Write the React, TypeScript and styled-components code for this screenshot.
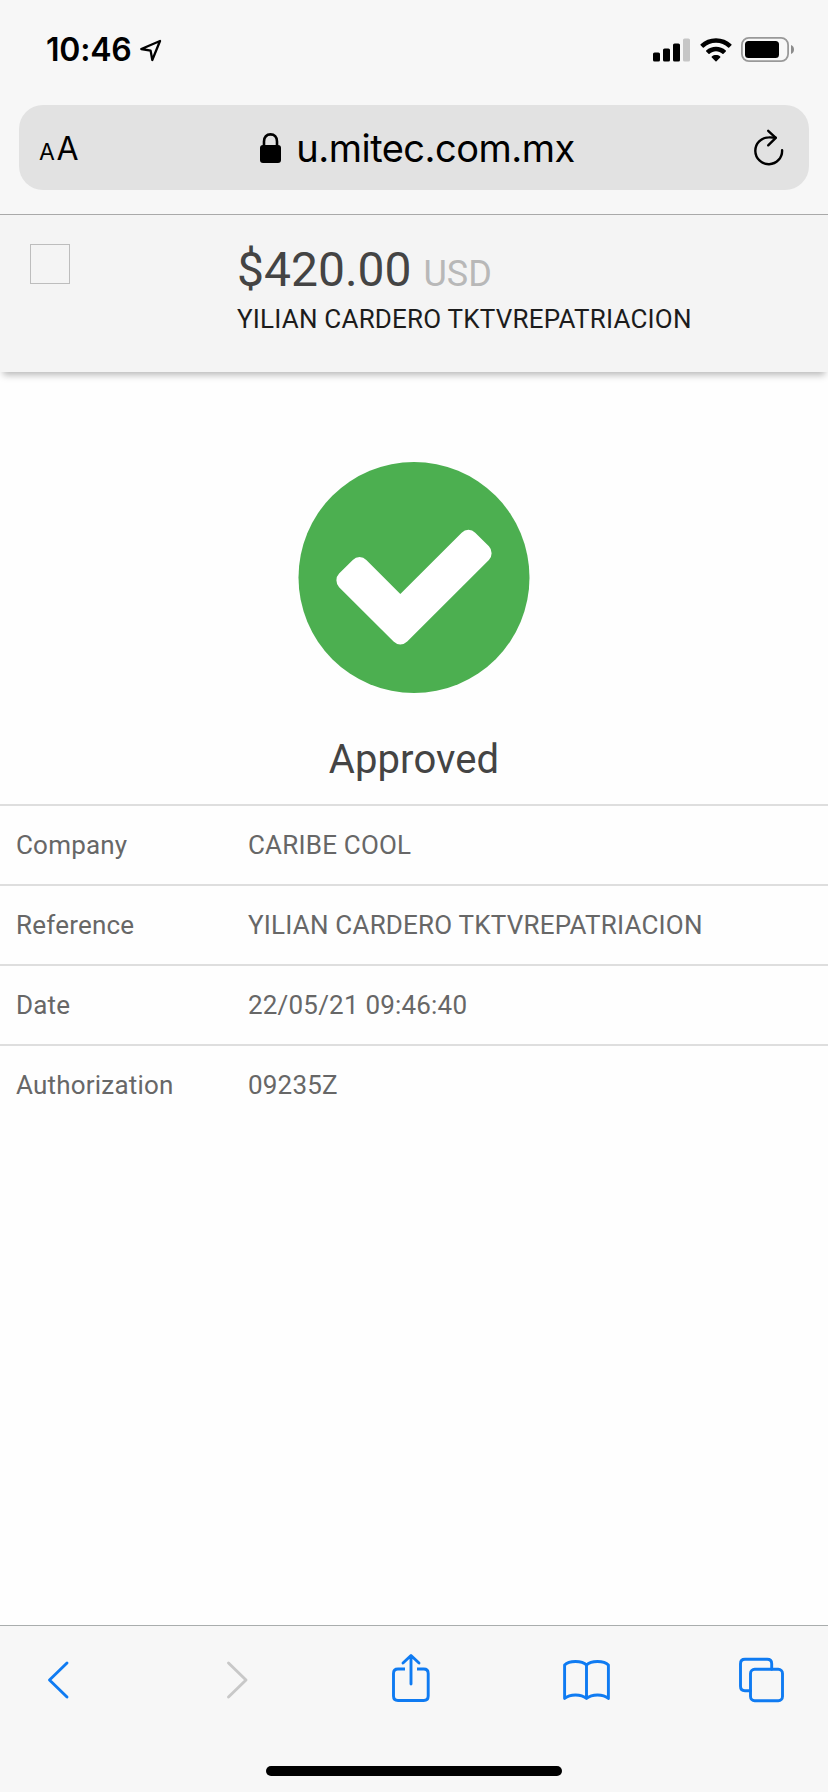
import React from 'react';
import styled, { createGlobalStyle } from 'styled-components';

const GlobalStyle = createGlobalStyle`
  *, *::before, *::after { box-sizing: border-box; }
  html, body { margin: 0; padding: 0; background: #fff; }
  svg { display: block; flex: none; }
`;

const Screen = styled.div`
  display: flex;
  flex-direction: column;
  width: 828px;
  height: 1792px;
  overflow: hidden;
  background: #fefefe;
  font-family: Roboto, sans-serif;
`;

const BrowserTop = styled.header`
  flex: none;
  height: 215px;
  background: #f7f7f7;
  border-bottom: 1px solid #a9a9a9;
  font-family: Inter, sans-serif;
  color: #000;
`;

const StatusBar = styled.div`
  display: flex;
  align-items: center;
  justify-content: space-between;
  height: 105px;
  padding: 0 34px 6px 46px;
`;

const StatusGroup = styled.div<{ $gap: number }>`
  display: flex;
  align-items: center;
  gap: ${(p) => p.$gap}px;
`;

const Clock = styled.span`
  font-size: 32px;
  font-weight: 600;
  line-height: 40px;
  letter-spacing: -0.2px;
`;

const AddressBar = styled.div`
  display: grid;
  grid-template-columns: 100px 1fr 100px;
  align-items: center;
  height: 85px;
  margin: 0 19px;
  padding: 0 25px 0 20px;
  border-radius: 24px;
  background: #e2e2e2;
`;

const TextSize = styled.div`
  display: flex;
  align-items: baseline;
  gap: 1.5px;
  padding-top: 5px;
  line-height: 40px;
`;

const Letter = styled.span<{ $size: number }>`
  font-size: ${(p) => p.$size}px;
`;

const Location = styled.div`
  display: flex;
  align-items: center;
  justify-content: center;
  gap: 15px;
  padding-left: 12px;
`;

const Host = styled.span`
  font-size: 38px;
  line-height: 48px;
  letter-spacing: -0.5px;
`;

const ReloadSlot = styled.div`
  display: flex;
  justify-content: flex-end;
`;

const PaymentHeader = styled.section`
  flex: none;
  display: flex;
  height: 157px;
  padding: 29px 30px 0;
  background: #f4f4f4;
  box-shadow: 0 6px 7px -3px rgba(0, 0, 0, 0.28);
`;

const Logo = styled.div`
  flex: none;
  width: 40px;
  height: 40px;
  margin-right: 167px;
  border: 1px solid #bdbdbd;
`;

const Amount = styled.div`
  height: 55px;
  margin-top: -2px;
  font-size: 48px;
  line-height: 55px;
  color: #444;
`;

const Currency = styled.span`
  font-size: 36px;
  color: #b8b8b8;
`;

const Concept = styled.div`
  margin-top: 6px;
  font-size: 26px;
  line-height: 32px;
  letter-spacing: 0.2px;
  color: #1c1c1c;
`;

const Result = styled.main`
  flex: 1;
  display: flex;
  flex-direction: column;
  align-items: center;
  padding-top: 90px;
`;

const ResultTitle = styled.h1`
  margin: 43px 0 0;
  height: 68px;
  font-size: 40px;
  font-weight: 400;
  line-height: 48px;
  letter-spacing: 0.1px;
  color: #444;
`;

const Details = styled.dl`
  width: 100%;
  margin: 0;
`;

const DetailRow = styled.div`
  display: grid;
  grid-template-columns: 232px 1fr;
  align-items: center;
  height: 80px;
  padding: 0 16px;
  border-top: 2px solid #dedede;
  font-size: 26px;
  line-height: 32px;
  letter-spacing: 0.2px;
  color: #676767;
`;

const Term = styled.dt``;

const Value = styled.dd`
  margin: 0;
`;

const Toolbar = styled.footer`
  flex: none;
  display: flex;
  flex-direction: column;
  justify-content: space-between;
  height: 167px;
  padding: 26px 0 16px;
  border-top: 1px solid #a9adad;
  background: #f7f7f7;
`;

const ToolbarButtons = styled.nav`
  display: flex;
  gap: 128px;
  padding-left: 34px;
`;

const HomeIndicator = styled.div`
  width: 296px;
  height: 10px;
  margin: 0 auto;
  border-radius: 5px;
  background: #000;
`;

const ToolSvg = styled.svg<{ $muted?: boolean }>`
  width: 48px;
  height: 56px;
  overflow: visible;
  fill: none;
  stroke: ${(p) => (p.$muted ? '#c8c8c8' : '#0f7bf2')};
  stroke-width: 2.9;
  stroke-linecap: round;
  stroke-linejoin: round;
`;

const LocationArrow = () => (
  <svg width="22" height="24" viewBox="0 0 22 24" fill="none" stroke="#000" strokeWidth="2.3" strokeLinejoin="round">
    <path d="M1.3 11 L20 3 L12.3 22 L10.6 12.6 Z" />
  </svg>
);

const Signal = () => (
  <svg width="37" height="24" viewBox="0 0 37 24">
    <rect x="0" y="14.5" width="7" height="9" rx="1.6" />
    <rect x="10" y="10.5" width="7" height="13" rx="1.6" />
    <rect x="20" y="5.5" width="7" height="18" rx="1.6" />
    <rect x="30" y="0.5" width="7" height="23" rx="1.6" fill="#c6c6c6" />
  </svg>
);

const Wifi = () => (
  <svg width="32" height="24" viewBox="0 0 32 24">
    <path d="M16 0.3 C10 0.3 4.6 2.5 0.6 6.3 Q0.1 6.8 0.6 7.3 L2.8 9.5 Q3.3 10 3.9 9.5 C7.1 6.5 11.3 4.8 16 4.8 C20.7 4.8 24.9 6.5 28.1 9.5 Q28.7 10 29.2 9.5 L31.4 7.3 Q31.9 6.8 31.4 6.3 C27.4 2.5 22 0.3 16 0.3 Z" />
    <path d="M16 8.7 C12.3 8.7 9 10 6.2 12.4 Q5.7 12.9 6.2 13.4 L8.5 15.7 Q9 16.2 9.6 15.7 C11.4 14.1 13.6 13.2 16 13.2 C18.4 13.2 20.6 14.1 22.4 15.7 Q23 16.2 23.5 15.7 L25.8 13.4 Q26.3 12.9 25.8 12.4 C23 10 19.7 8.7 16 8.7 Z" />
    <path d="M16 17 C14.4 17 13 17.5 11.8 18.4 Q11.2 18.9 11.8 19.5 L15.5 23.2 Q16 23.7 16.5 23.2 L20.2 19.5 Q20.8 18.9 20.2 18.4 C19 17.5 17.6 17 16 17 Z" />
  </svg>
);

const Battery = () => (
  <svg width="53" height="25" viewBox="0 0 53 25">
    <rect x="0.9" y="0.9" width="46.2" height="23.2" rx="7" fill="none" stroke="#999" strokeWidth="1.8" />
    <rect x="4" y="4" width="34" height="17" rx="3.5" />
    <path d="M50 8 Q53 9.2 53 12.5 Q53 15.8 50 17 Z" fill="#8c8c8c" />
  </svg>
);

const Lock = () => (
  <svg width="21" height="30" viewBox="0 0 21 30">
    <path d="M4 13.5 V8.5 C4 4 6.7 1.4 10.5 1.4 C14.3 1.4 17 4 17 8.5 V13.5" fill="none" stroke="#000" strokeWidth="2.6" />
    <rect x="0" y="12" width="21" height="18" rx="3" />
  </svg>
);

const Reload = () => (
  <svg width="30" height="38" viewBox="0 0 30 38" fill="none" stroke="#000" strokeWidth="2.4" strokeLinecap="round" strokeLinejoin="round">
    <path d="M28.1 21.2 A13.4 13.4 0 1 1 14.7 8.4 Q18.3 8.3 21.6 8.7" />
    <path d="M14.2 1.8 L21.8 8.9 L14.2 16.3" />
  </svg>
);

const ApprovedMark = () => (
  <svg width="232" height="231" viewBox="128 128 1536 1536">
    <circle cx="896" cy="896" r="768" fill="#4caf50" />
    <path
      fill="#fff"
      d="M1412 734q0-28-18-46l-91-90q-19-19-45-19t-45 19l-408 407-226-226q-19-19-45-19t-45 19l-91 90q-18 18-18 46 0 27 18 45l362 362q19 19 45 19 27 0 46-19l543-543q18-18 18-45z"
    />
  </svg>
);

const details = [
  { term: 'Company', value: 'CARIBE COOL' },
  { term: 'Reference', value: 'YILIAN CARDERO TKTVREPATRIACION' },
  { term: 'Date', value: '22/05/21 09:46:40' },
  { term: 'Authorization', value: '09235Z' },
];

export default function App() {
  return (
    <Screen>
      <GlobalStyle />
      <BrowserTop>
        <StatusBar>
          <StatusGroup $gap={8}>
            <Clock>10:46</Clock>
            <LocationArrow />
          </StatusGroup>
          <StatusGroup $gap={9.5}>
            <Signal />
            <Wifi />
            <Battery />
          </StatusGroup>
        </StatusBar>
        <AddressBar>
          <TextSize>
            <Letter $size={23}>A</Letter>
            <Letter $size={32}>A</Letter>
          </TextSize>
          <Location>
            <Lock />
            <Host>u.mitec.com.mx</Host>
          </Location>
          <ReloadSlot>
            <Reload />
          </ReloadSlot>
        </AddressBar>
      </BrowserTop>

      <PaymentHeader>
        <Logo />
        <div>
          <Amount>
            $420.00 <Currency>USD</Currency>
          </Amount>
          <Concept>YILIAN CARDERO TKTVREPATRIACION</Concept>
        </div>
      </PaymentHeader>

      <Result>
        <ApprovedMark />
        <ResultTitle>Approved</ResultTitle>
        <Details>
          {details.map(({ term, value }) => (
            <DetailRow key={term}>
              <Term>{term}</Term>
              <Value>{value}</Value>
            </DetailRow>
          ))}
        </Details>
      </Result>

      <Toolbar>
        <ToolbarButtons>
          <ToolSvg viewBox="0 0 48 56">
            <path d="M33 11 L15.5 28 L33 45" />
          </ToolSvg>
          <ToolSvg viewBox="0 0 48 56" $muted>
            <path d="M18.5 11 L36 28 L18.5 45" />
          </ToolSvg>
          <ToolSvg viewBox="0 0 48 56">
            <path strokeLinecap="butt" d="M19 17 H12 Q7.5 17 7.5 21.5 V44 Q7.5 48.5 12 48.5 H37.7 Q42.2 48.5 42.2 44 V21.5 Q42.2 17 37.7 17 H31" />
            <path d="M25 4 V32 M17 11 L25 3.5 L33 11" />
          </ToolSvg>
          <ToolSvg viewBox="0 0 48 56">
            <path d="M24.5 13 C20 8.3 7 8.3 2.6 13 V46.5 C8 41.8 19 41.8 24.5 46.5 C30 41.8 41 41.8 46.4 46.5 V13 C42 8.3 29 8.3 24.5 13 Z M24.5 13 V46.5" />
          </ToolSvg>
          <ToolSvg viewBox="0 0 48 56">
            <path d="M12.5 38.7 H7 Q2.5 38.7 2.5 34.2 V11.8 Q2.5 7.3 7 7.3 H29.2 Q33.7 7.3 33.7 11.8 V17.2" />
            <rect x="12.5" y="17.2" width="32" height="31.5" rx="4.2" />
          </ToolSvg>
        </ToolbarButtons>
        <HomeIndicator />
      </Toolbar>
    </Screen>
  );
}
